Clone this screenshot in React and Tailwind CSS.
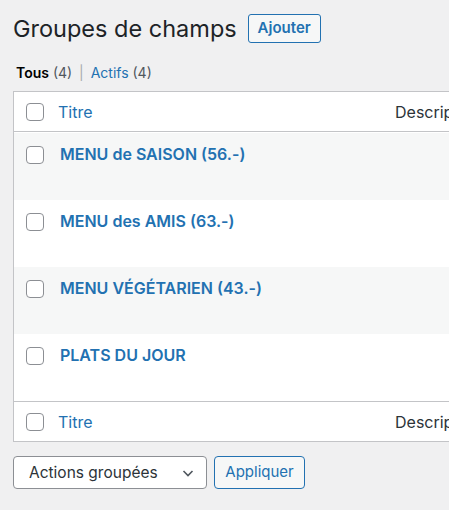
import React from 'react';

const groups = [
  'MENU de SAISON (56.-)',
  'MENU des AMIS (63.-)',
  'MENU VÉGÉTARIEN (43.-)',
  'PLATS DU JOUR',
];

// simple WP style checkbox
const Box = () => (
  <span className="block w-[18px] h-[18px] shrink-0 rounded-[4px] border border-[#8c8f94] bg-white" />
);

const HeadRow = ({ top }) => (
  <div className={`flex items-center h-[40px] ${top ? 'border-b' : 'border-t'} border-[#c3c4c7]`}>
    <div className="pl-[12px] w-[44px]">
      <Box />
    </div>
    <div className="w-[337px] text-[16px] text-[#2271b1]">Titre</div>
    <div className="text-[16px] text-[#2c3338]">Description</div>
  </div>
);

export default function App() {
  return (
    <div
      className="min-h-screen w-[449px] overflow-hidden bg-[#f0f0f1] pl-[13px] pt-[14px]"
      style={{ fontFamily: 'Inter, "Liberation Sans", Arial, sans-serif' }}
    >
      <div className="flex items-start gap-[11px]">
        <h1 className="text-[23.5px] leading-[29px] font-normal text-[#1d2327]">Groupes de champs</h1>
        <button className="h-[29px] w-[73px] rounded-[3px] border border-[#2271b1] bg-[#f6f7f7] text-[15px] font-semibold text-[#2271b1]">
          Ajouter
        </button>
      </div>

      <div className="mt-[20px] pl-[3px] text-[14px] leading-[20px] text-[#50575e]">
        <span className="font-semibold text-[#000]">Tous</span> (4) <span className="px-[3px] text-[#a7aaad]">|</span>{' '}
        <span className="text-[#2271b1]">Actifs</span> (4)
      </div>

      <div className="mt-[8px] w-[600px] border border-[#c3c4c7] bg-white">
        <HeadRow top />
        {groups.map((g, i) => (
          <div
            key={g}
            className={`flex items-start h-[67px] ${i % 2 === 0 ? 'bg-[#f6f7f7]' : 'bg-white'} ${i === 0 ? 'mt-[1px]' : ''}`}
          >
            <div className="pl-[12px] pt-[13px] w-[46px]">
              <Box />
            </div>
            <div className="pt-[11px] text-[16px] leading-[20px] font-semibold text-[#2271b1]">{g}</div>
          </div>
        ))}
        <HeadRow />
      </div>

      <div className="mt-[14px] flex items-center gap-[7px]">
        <div className="flex items-center justify-between h-[33px] w-[194px] rounded-[4px] border border-[#8c8f94] bg-white pl-[15px] pr-[10px] text-[15.5px] text-[#2c3338]">
          <span>Actions groupées</span>
          <svg width="16" height="16" viewBox="0 0 16 16" fill="none">
            <path d="M3.5 6 L8 10.5 L12.5 6" stroke="#50575e" strokeWidth="1.6" />
          </svg>
        </div>
        <button className="h-[33px] w-[91px] rounded-[4px] border border-[#2271b1] bg-[#f6f7f7] text-[15px] text-[#2271b1]">
          Appliquer
        </button>
      </div>
    </div>
  );
}
